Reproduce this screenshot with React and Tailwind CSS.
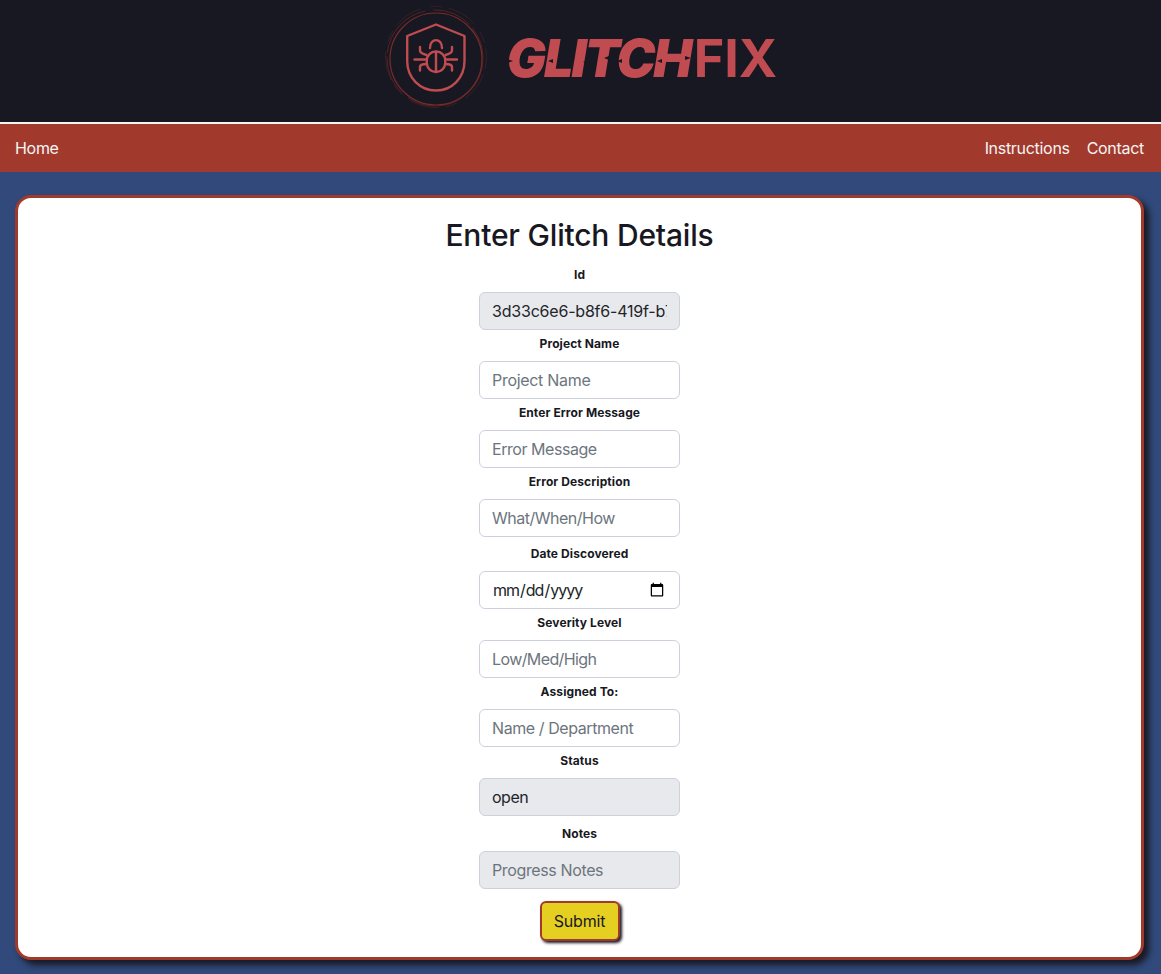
const FONT = "font-['Inter',sans-serif]";

function Logo() {
  return (
    <svg viewBox="384 6 106 110" className="w-[106px] h-[110px] shrink-0" fill="none">
      <circle cx="436" cy="59" r="46" stroke="#7a2b28" strokeWidth="1.2" />
      <circle cx="435" cy="58" r="48" stroke="#6a2826" strokeWidth="0.7" strokeDasharray="40 4 60 8" />
      <circle cx="436" cy="57" r="50.5" stroke="#5a2528" strokeWidth="0.5" strokeDasharray="12 6 30 10" />
      <g stroke="#c04b50" strokeWidth="2.4" strokeLinecap="round" strokeLinejoin="round">
        <path d="M436 24.5 L464.5 36 V61 C464.5 78 452 90.5 436 90.5 C420 90.5 407.2 78 407.2 61 V36 Z" />
        <path d="M430 48 C430 37.5 442 37.5 442 48" />
        <rect x="426.8" y="51.5" width="18.4" height="20.5" rx="9" />
        <path d="M436 52 V71.5" />
        <path d="M414.5 59.5 H426.5 M445.5 59.5 H457" />
        <path d="M420 47 V50.5 C420 53 423 54 426.5 55" />
        <path d="M452 47 V50.5 C452 53 449 54 445.5 55" />
        <path d="M420 70.5 V67 C420 65 423 64 426.5 64" />
        <path d="M452 70.5 V67 C452 65 449 64 445.5 64" />
      </g>
    </svg>
  );
}

function Field({ label, placeholder, value, disabled, type = "text", extra = "", inputClass = "tracking-[-0.3px]" }) {
  return (
    <div className={`flex flex-col items-center ${extra}`}>
      <label className="block h-[31px] pt-[5px] text-[12px] leading-[18px] font-bold tracking-[0.1px] text-[#181822] text-center">
        {label}
      </label>
      <input
        type={type}
        placeholder={placeholder}
        defaultValue={value}
        disabled={disabled}
        className={`block w-[201px] h-[38px] px-[12px] text-[16px] leading-[24px] text-[#212529] placeholder:text-[#6c757d] border border-[#ced0dc] rounded-[6px] outline-none ${inputClass} ${
          disabled ? "bg-[#e8e9ed]" : "bg-white"
        }`}
      />
    </div>
  );
}

export default function App() {
  return (
    <div className={`${FONT} min-h-[974px] bg-[#314a7b] text-[#212529]`}>
      <header className="h-[124px] bg-[#181822] border-b-2 border-[#f3f3f3] flex items-center justify-center">
        <Logo />
        <div className="relative flex items-center ml-[17px] mt-[-5px] text-[#c04b50] text-[52px] leading-[60px]">
          <span className="font-black italic w-[187px] tracking-[-2px] whitespace-nowrap">GLITCH</span>
          <span className="font-bold whitespace-nowrap">FIX</span>
          <svg viewBox="0 0 190 60" className="absolute left-0 top-0 w-[190px] h-[60px]" fill="#181822">
            <path d="M0 30 L6 32 L0 34 Z" />
            <path d="M13 27 L21 30 L17 35 L13 33 Z" />
            <path d="M41 32 L46 30 L46 34 Z" />
            <path d="M63 27 L68 29 L63 31 Z" />
            <path d="M76 33 L81 31 L81 35 Z" />
            <path d="M97 29 L102 27 L102 31 Z" />
            <path d="M110 32 L115 30 L115 34 Z" />
            <path d="M132 26 L138 29 L132 32 Z" />
            <path d="M150 32 L155 30 L155 34 Z" />
            <path d="M178 27 L184 29 L178 31 Z" />
          </svg>
        </div>
      </header>
      <nav className="h-[48px] bg-[#a13a2c] flex items-center justify-between pl-[15px] pr-[17px] text-[16px] tracking-[-0.3px] text-[#f5f5f5]">
        <a>Home</a>
        <div className="flex gap-[17px]">
          <a>Instructions</a>
          <a>Contact</a>
        </div>
      </nav>
      <main className="pt-[23px] pl-[15px] pr-[17px]">
        <div className="h-[765px] bg-white border-[3px] border-[#a13a2c] rounded-[16px] shadow-[5px_5px_6px_#181822] flex flex-col items-center pt-[18px]">
          <h2 className="text-[30px] leading-[38px] font-medium tracking-[-0.2px] text-[#181822] mb-[20px]">Enter Glitch Details</h2>
          <Field label="Id" value="3d33c6e6-b8f6-419f-b7c2-8e1f40a2" disabled extra="mt-[-13px]" inputClass="tracking-[-0.2px]" />
          <Field label="Project Name" placeholder="Project Name" />
          <Field label="Enter Error Message" placeholder="Error Message" inputClass="tracking-[-0.45px]" />
          <Field label="Error Description" placeholder="What/When/How" inputClass="tracking-[-0.5px]" />
          <Field label="Date Discovered" type="date" extra="mt-[3px]" inputClass="tracking-[-1px]" />
          <Field label="Severity Level" placeholder="Low/Med/High" inputClass="tracking-[-0.6px]" />
          <Field label="Assigned To:" placeholder="Name / Department" inputClass="tracking-[-0.42px]" />
          <Field label="Status" value="open" disabled inputClass="tracking-[-0.5px]" />
          <Field label="Notes" placeholder="Progress Notes" disabled extra="mt-[4px]" inputClass="tracking-[-0.37px]" />
          <button className="mt-[12px] w-[80px] h-[40px] bg-[#e5d022] border-2 border-[#a13a2c] rounded-[6px] text-[16px] tracking-[-0.2px] text-[#181822] shadow-[2px_2px_3px_#181822]">
            Submit
          </button>
        </div>
      </main>
    </div>
  );
}
